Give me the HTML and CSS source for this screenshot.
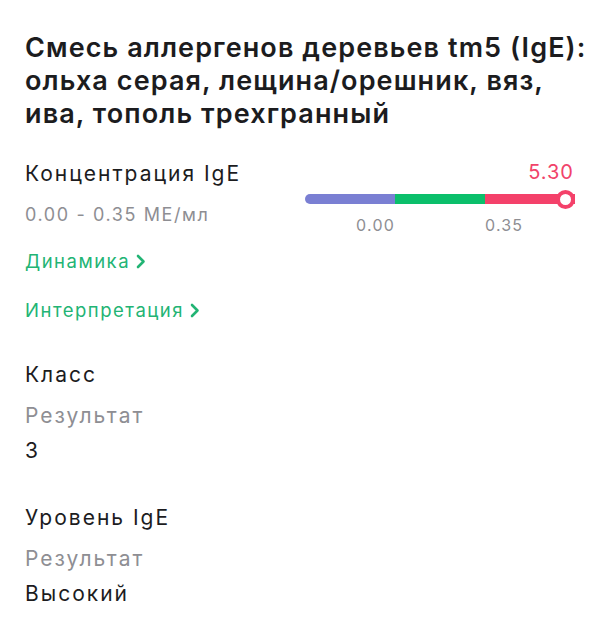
FILE: index.html
```html
<!DOCTYPE html>
<html lang="ru">
<head>
    <meta charset="UTF-8">
    <meta name="viewport" content="width=device-width, initial-scale=1.0">
    <title>tm5 (IgE)</title>
    <link rel="stylesheet" href="styles.css">
</head>
<body>

    <div class="page">
        <h1 class="title">Смесь аллергенов деревьев tm5 (IgE): ольха серая, лещина/орешник, вяз, ива, тополь трехгранный</h1>

        <div class="conc-row">
            <div class="conc-info">
                <div class="label">Концентрация IgE</div>
                <div class="range">0.00 - 0.35 МЕ/мл</div>
            </div>
            <div class="scale">
                <div class="scale-value">5.30</div>
                <div class="track">
                    <div class="seg seg-low"></div>
                    <div class="seg seg-norm"></div>
                    <div class="seg seg-high"></div>
                    <div class="marker"></div>
                </div>
                <div class="scale-labels">
                    <span class="tick-first">0.00</span>
                    <span></span>
                    <span class="tick-last">0.35</span>
                </div>
            </div>
        </div>

        <a class="link link-first" href="#">Динамика
            <svg width="11" height="15" viewBox="0 0 11 15"><polyline points="3,2 8.5,7.5 3,13" fill="none" stroke="currentColor" stroke-width="2.6" stroke-linecap="round" stroke-linejoin="round"/></svg>
        </a>
        <a class="link" href="#">Интерпретация
            <svg width="11" height="15" viewBox="0 0 11 15"><polyline points="3,2 8.5,7.5 3,13" fill="none" stroke="currentColor" stroke-width="2.6" stroke-linecap="round" stroke-linejoin="round"/></svg>
        </a>

        <div class="section">
            <div class="label">Класс</div>
            <div class="caption">Результат</div>
            <div class="value">3</div>
        </div>

        <div class="section">
            <div class="label">Уровень IgE</div>
            <div class="caption">Результат</div>
            <div class="value">Высокий</div>
        </div>
    </div>

</body>
</html>
```

FILE: styles.css
```css
body {
    margin: 0;
    padding: 0;
    background: #fff;
    font-family: Inter, "Noto Sans", sans-serif;
    color: #1c1c1e;
}
.page {
    padding: 31px 25px 0 25px;
}
.title {
    margin: 0 -12px 0 0;
    font-size: 27px;
    line-height: 33px;
    font-weight: 600;
    letter-spacing: 1.1px;
}
.conc-row {
    display: flex;
    justify-content: space-between;
    margin-top: 30px;
}
.label {
    font-size: 21px;
    line-height: 28px;
    letter-spacing: 2px;
}
.range {
    margin-top: 15px;
    font-size: 18px;
    line-height: 24px;
    letter-spacing: 1.6px;
    color: #8e8e93;
}
.scale {
    width: 270px;
}
.scale-value {
    text-align: right;
    padding-right: 1px;
    font-size: 20px;
    line-height: 24px;
    letter-spacing: 1px;
    color: #f1436a;
}
.track {
    position: relative;
    display: flex;
    height: 10px;
    margin-top: 10px;
}
.seg {
    flex: 1;
}
.seg-low {
    background: #7a7fd3;
    border-radius: 5px 0 0 5px;
}
.seg-norm {
    background: #0bbf6b;
}
.seg-high {
    background: #f4416a;
}
.marker {
    position: absolute;
    right: 0;
    top: 50%;
    width: 11px;
    height: 11px;
    margin-top: -9.5px;
    border: 4px solid #f4416a;
    border-radius: 50%;
    background: #fff;
}
.scale-labels {
    display: grid;
    grid-template-columns: 1fr 1fr 1fr;
    margin-top: 11px;
    font-size: 16px;
    line-height: 20px;
    letter-spacing: 1.2px;
    color: #8e8e93;
}
.tick-first {
    text-align: right;
}
.tick-last {
    text-align: left;
}
.link {
    display: flex;
    align-items: center;
    gap: 5px;
    margin-top: 25px;
    font-size: 18.5px;
    line-height: 24px;
    letter-spacing: 1.5px;
    color: #22b474;
    text-decoration: none;
}
.link-first {
    margin-top: 14px;
}
.section {
    margin-top: 39px;
}
.caption {
    margin-top: 13px;
    font-size: 21px;
    line-height: 28px;
    letter-spacing: 2px;
    color: #8e8e93;
}
.value {
    margin-top: 7px;
    font-size: 21px;
    line-height: 28px;
    letter-spacing: 2px;
}
```
